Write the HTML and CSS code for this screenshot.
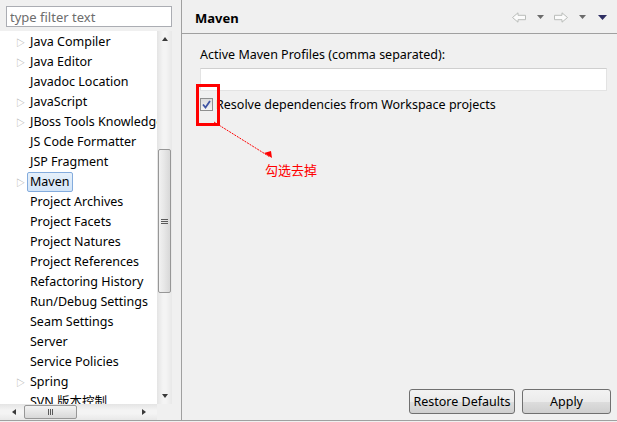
FILE: index.html
```html
<!DOCTYPE html>
<html lang="en">
<head>
    <meta charset="UTF-8">
    <title>Preferences - Maven</title>
    <link rel="stylesheet" href="styles.css">
</head>
<body>

<div class="window">
    <div class="left">
        <input class="filter" type="text" placeholder="type filter text">
        <div class="tree-box">
            <div class="tree-main">
                <ul class="tree">
                    <li class="node"><span class="twisty">&#9655;</span><span class="label">Java Compiler</span></li>
                    <li class="node"><span class="twisty">&#9655;</span><span class="label">Java Editor</span></li>
                    <li class="node"><span class="twisty"></span><span class="label">Javadoc Location</span></li>
                    <li class="node"><span class="twisty">&#9655;</span><span class="label">JavaScript</span></li>
                    <li class="node"><span class="twisty">&#9655;</span><span class="label">JBoss Tools Knowledge Base</span></li>
                    <li class="node"><span class="twisty"></span><span class="label">JS Code Formatter</span></li>
                    <li class="node"><span class="twisty"></span><span class="label">JSP Fragment</span></li>
                    <li class="node"><span class="twisty">&#9655;</span><span class="label selected">Maven</span></li>
                    <li class="node"><span class="twisty"></span><span class="label">Project Archives</span></li>
                    <li class="node"><span class="twisty"></span><span class="label">Project Facets</span></li>
                    <li class="node"><span class="twisty"></span><span class="label">Project Natures</span></li>
                    <li class="node"><span class="twisty"></span><span class="label">Project References</span></li>
                    <li class="node"><span class="twisty"></span><span class="label">Refactoring History</span></li>
                    <li class="node"><span class="twisty"></span><span class="label">Run/Debug Settings</span></li>
                    <li class="node"><span class="twisty"></span><span class="label">Seam Settings</span></li>
                    <li class="node"><span class="twisty"></span><span class="label">Server</span></li>
                    <li class="node"><span class="twisty"></span><span class="label">Service Policies</span></li>
                    <li class="node"><span class="twisty">&#9655;</span><span class="label">Spring</span></li>
                    <li class="node"><span class="twisty"></span><span class="label">SVN 版本控制</span></li>
                </ul>
                <div class="vscroll">
                    <span class="arrow up"></span>
                    <div class="vtrack"><div class="vthumb"><span class="grip-h"></span></div></div>
                    <span class="arrow down"></span>
                </div>
            </div>
            <div class="hscroll-row">
                <div class="hscroll">
                    <span class="arrow left-a"></span>
                    <div class="htrack"><div class="hthumb"><span class="grip-v"></span></div></div>
                    <span class="arrow right-a"></span>
                </div>
                <div class="corner"></div>
            </div>
        </div>
    </div>

    <div class="right">
        <div class="page-header">
            <h1>Maven</h1>
            <div class="nav">
                <svg width="14" height="11" viewBox="0 0 14 11"><path d="M0.5 5.5 L6 0.8 V3.3 H13.5 V7.7 H6 V10.2 Z" fill="#fbfbfb" stroke="#b9bcb9"/></svg>
                <svg class="drop" width="7" height="4" viewBox="0 0 7 4"><path d="M0 0 H7 L3.5 4 Z" fill="#6b6b6b"/></svg>
                <svg width="14" height="11" viewBox="0 0 14 11"><path d="M13.5 5.5 L8 0.8 V3.3 H0.5 V7.7 H8 V10.2 Z" fill="#fbfbfb" stroke="#b9bcb9"/></svg>
                <svg class="drop" width="7" height="4" viewBox="0 0 7 4"><path d="M0 0 H7 L3.5 4 Z" fill="#6b6b6b"/></svg>
                <svg class="menu" width="9" height="5" viewBox="0 0 9 5"><path d="M0 0 H9 L4.5 5 Z" fill="#2e2e62"/></svg>
            </div>
        </div>

        <div class="page-body">
            <label class="field-label" for="profiles">Active Maven Profiles (comma separated):</label>
            <input class="text-field" id="profiles" type="text">
            <label class="check-row">
                <span class="checkbox">
                    <svg width="9" height="9" viewBox="0 0 9 9"><path d="M1 4.5 L3.5 7.5 L8 1" fill="none" stroke="#3f54a3" stroke-width="1.8"/></svg>
                </span>
                Resolve dependencies from Workspace projects
            </label>

            <div class="buttons">
                <button class="btn restore">Restore Defaults</button>
                <button class="btn apply">Apply</button>
            </div>
        </div>
    </div>

    <!-- annotation drawn over the screenshot -->
    <div class="mark-box"></div>
    <svg class="mark-arrow" width="70" height="50" viewBox="0 0 70 50">
        <path d="M2 2 L58 37" stroke="#ff0000" stroke-width="1" stroke-dasharray="2 1" fill="none"/>
        <path d="M52 33 L59 31 L60 38 Z" fill="#ff0000"/>
    </svg>
    <div class="mark-text">勾选去掉</div>
</div>

</body>
</html>
```

FILE: styles.css
```css
* {
    box-sizing: border-box;
    margin: 0;
    padding: 0;
}

body {
    font-family: "Noto Sans", "Noto Sans CJK SC", sans-serif;
    font-size: 12px;
    color: #000;
    background: #f0f0f0;
    overflow: hidden;
}

.window {
    position: relative;
    width: 617px;
    display: flex;
    border-bottom: 1px solid #a0a0a0;
    height: 421px;
}

/* left side: filter + tree */
.left {
    width: 182px;
    padding-top: 6px;
    display: flex;
    flex-direction: column;
    border-right: 1px solid #a0a0a0;
}

.filter {
    margin-left: 6px;
    width: 166px;
    height: 21px;
    border: 1px solid #abadb3;
    padding: 0 3px;
    font-family: inherit;
    font-size: 13px;
    outline: none;
}

.filter::placeholder {
    color: #6d6d6d;
}

.tree-box {
    margin-top: 4px;
    width: 172px;
    flex: 1;
    display: flex;
    flex-direction: column;
}

.tree-main {
    display: flex;
    height: 373px;
}

.tree {
    list-style: none;
    width: 157px;
    padding-top: 1px;
    background: #fff;
    overflow: hidden;
    white-space: nowrap;
}

.node {
    height: 20px;
    display: flex;
    align-items: center;
}

.twisty {
    flex-shrink: 0;
    width: 30px;
    padding-left: 16px;
    color: #a9a9a9;
    font-size: 9px;
}

.label {
    padding: 0 3px 1px 2px;
    margin-left: -3px;
    line-height: 17px;
    border: 1px solid transparent;
    font-size: 12.5px;
}

.label.selected {
    background: linear-gradient(#e6f0fa, #d3e5f8);
    border-color: #84acdd;
    border-radius: 2px;
}

/* scrollbars */
.vscroll {
    width: 15px;
    display: flex;
    flex-direction: column;
    background: linear-gradient(to right, #e4e4e4, #f4f4f4 40%, #f4f4f4 60%, #e8e8e8);
}

.vtrack {
    flex: 1;
    padding-top: 101px;
}

.vthumb {
    height: 144px;
    margin: 0 1px;
    border: 1px solid #979797;
    border-radius: 2px;
    background: linear-gradient(to right, #f2f2f2, #e6e6e6 50%, #d8d8d8);
    display: flex;
    align-items: center;
    justify-content: center;
}

.grip-h {
    width: 7px;
    height: 5px;
    border-top: 1px solid #5a5a5a;
    border-bottom: 1px solid #5a5a5a;
    background: linear-gradient(transparent 1px, #5a5a5a 1px, #5a5a5a 2px, transparent 2px);
}

.arrow {
    width: 15px;
    height: 17px;
    display: flex;
    align-items: center;
    justify-content: center;
}

.arrow::after {
    content: "";
    border: 3px solid transparent;
}

.arrow.up::after {
    border-bottom: 4px solid #3a3a3a;
    border-top: 0;
    margin-top: -2px;
}

.arrow.down::after {
    border-top: 4px solid #3a3a3a;
    border-bottom: 0;
}

.arrow.left-a::after {
    border-right: 4px solid #3a3a3a;
    border-left: 0;
}

.arrow.right-a::after {
    border-left: 4px solid #3a3a3a;
    border-right: 0;
}

.hscroll-row {
    display: flex;
    height: 16px;
}

.hscroll {
    width: 157px;
    display: flex;
    background: linear-gradient(#e4e4e4, #f4f4f4 40%, #f4f4f4 60%, #e8e8e8);
}

.hscroll .arrow {
    width: 17px;
    height: 16px;
    margin-left: 5px;
}

.hscroll .arrow.right-a {
    margin-left: 0;
    margin-right: 5px;
}

.htrack {
    flex: 1;
    padding-top: 1px;
    padding-left: 2px;
}

.hthumb {
    width: 53px;
    height: 14px;
    border: 1px solid #979797;
    border-radius: 2px;
    background: linear-gradient(#f2f2f2, #e6e6e6 50%, #d8d8d8);
    display: flex;
    align-items: center;
    justify-content: center;
}

.grip-v {
    width: 5px;
    height: 6px;
    border-left: 1px solid #5a5a5a;
    border-right: 1px solid #5a5a5a;
    background: linear-gradient(to right, transparent 1px, #5a5a5a 1px, #5a5a5a 2px, transparent 2px);
}

.corner {
    flex: 1;
    background: #f0f0f0;
}

/* right side: preference page */
.right {
    flex: 1;
    display: flex;
    flex-direction: column;
}

.page-header {
    height: 34px;
    border-bottom: 1px solid #a0a0a0;
    display: flex;
    align-items: center;
    justify-content: space-between;
    padding: 0 10px 0 13px;
}

.page-header h1 {
    font-size: 13px;
    font-weight: bold;
    margin-top: 2px;
}

.nav {
    display: flex;
    align-items: center;
    margin-top: 1px;
}

.nav .drop {
    margin: 0 10px 0 11px;
}

.nav .menu {
    margin-left: 2px;
}

.page-body {
    flex: 1;
    display: flex;
    flex-direction: column;
    padding: 12px 10px 6px 18px;
}

.field-label {
    font-size: 12.5px;
    line-height: 17px;
}

.text-field {
    margin-top: 5px;
    height: 23px;
    border: 1px solid #e3e3e3;
    border-top-color: #cfcfcf;
    background: #fff;
    outline: none;
}

.check-row {
    margin-top: 5px;
    display: flex;
    align-items: center;
    gap: 3px;
    font-size: 12.5px;
    line-height: 17px;
}

.checkbox {
    width: 13px;
    height: 13px;
    border: 1px solid #8e8f8f;
    background: linear-gradient(#dcdcdc, #f4f4f4);
    display: flex;
    align-items: center;
    justify-content: center;
}

.buttons {
    margin-top: auto;
    display: flex;
    justify-content: flex-end;
    gap: 7px;
    margin-right: -4px;
}

.btn {
    height: 25px;
    border: 1px solid #707070;
    border-radius: 3px;
    background: linear-gradient(#f2f2f2 0%, #ebebeb 50%, #dddddd 51%, #cfcfcf 100%);
    font-family: inherit;
    font-size: 12.5px;
    color: #000;
}

.restore {
    width: 106px;
}

.apply {
    width: 89px;
}

/* red annotation over the page */
.mark-box {
    position: absolute;
    left: 196px;
    top: 84px;
    width: 24px;
    height: 42px;
    border: 3px solid #ff0000;
}

.mark-arrow {
    position: absolute;
    left: 212px;
    top: 120px;
}

.mark-text {
    position: absolute;
    left: 265px;
    top: 160px;
    color: #ff0000;
    font-size: 13px;
}
```
